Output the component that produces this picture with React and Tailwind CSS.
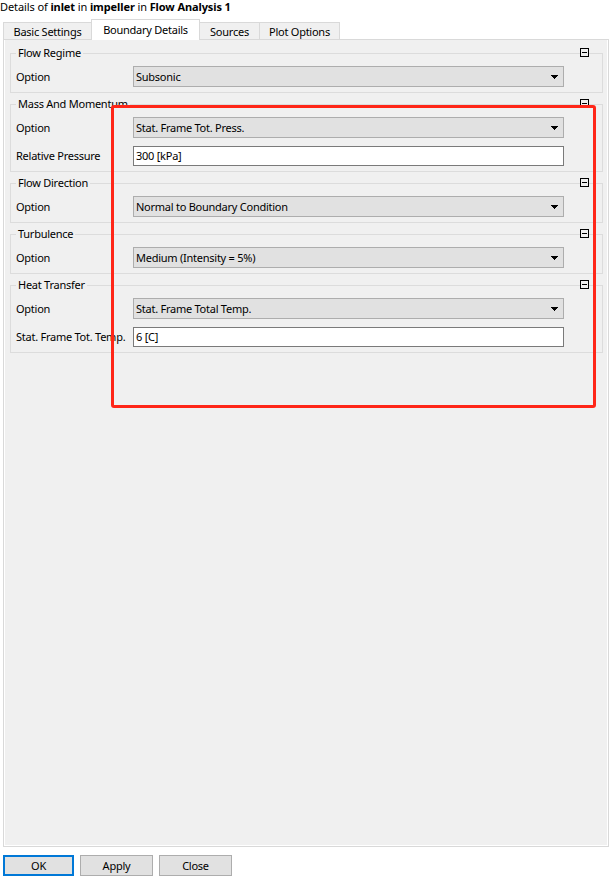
import React from 'react';

const Arrow = () => (
  <svg width="7" height="4" viewBox="0 0 7 4" className="shrink-0" shapeRendering="crispEdges">
    <path d="M0 0H7L3.5 4Z" fill="#000" />
  </svg>
);

const Collapse = () => (
  <svg width="9" height="9" viewBox="0 0 9 9" shapeRendering="crispEdges">
    <rect x="0.5" y="0.5" width="8" height="8" fill="#f0f0f0" stroke="#000" />
    <path d="M2 4.5H7" stroke="#000" />
  </svg>
);

const Combo = ({ value }) => (
  <div className="flex h-[21px] w-[431px] items-center justify-between border border-[#adadad] bg-[#e1e1e1] pl-[2px] pr-[5px]">
    <span className="whitespace-nowrap">{value}</span>
    <Arrow />
  </div>
);

const TextField = ({ value }) => (
  <div className="flex h-[20px] w-[431px] items-center border border-[#7a7a7a] bg-white pl-[2px]">
    <span className="whitespace-nowrap">{value}</span>
  </div>
);

const Row = ({ label, children, className = '' }) => (
  <div className={`flex items-center ${className}`}>
    <div className="w-[117px] shrink-0 whitespace-nowrap">{label}</div>
    {children}
  </div>
);

const Group = ({ title, first, children }) => (
  <div className={`relative ${first ? '' : 'mt-[4px]'}`}>
    <fieldset className="min-w-0 border border-[#dcdcdc] pl-[5px] pr-0 pt-[6px] pb-[5px]">
      <legend className="px-[2px] leading-[14px]">{title}</legend>
      {children}
    </fieldset>
    <div className="absolute right-[14px] top-[2px] leading-none">
      <Collapse />
    </div>
  </div>
);

const tabs = [
  { label: 'Basic Settings', w: 'w-[89px]' },
  { label: 'Boundary Details', w: 'w-[109px]', active: true },
  { label: 'Sources', w: 'w-[61px]' },
  { label: 'Plot Options', w: 'w-[81px]' },
];

export default function App() {
  return (
    <div className="relative h-[877px] w-[614px] overflow-hidden bg-white font-['Noto_Sans',sans-serif] text-[11px] leading-[14px] tracking-[-0.25px] text-black">
      <div className="h-[14px] whitespace-nowrap tracking-[-0.1px]">
        Details of <b>inlet</b> in <b>impeller</b> in <b>Flow Analysis 1</b>
      </div>

      <div className="flex h-[25px] items-end pl-[3px]">
        {tabs.map((t, i) =>
          t.active ? (
            <div
              key={t.label}
              className={`relative z-10 -mb-px -ml-px flex h-[21px] ${t.w} items-center justify-center border border-b-0 border-[#d9d9d9] bg-white pb-[1px]`}
            >
              {t.label}
            </div>
          ) : (
            <div
              key={t.label}
              className={`flex h-[17px] ${t.w} ${i > 0 ? '-ml-px' : ''} items-center justify-center border border-b-0 border-[#d9d9d9] bg-[#f0f0f0] pt-[1px]`}
            >
              {t.label}
            </div>
          )
        )}
      </div>

      <div className="ml-[3px] h-[808px] w-[606px] border border-[#d9d9d9] bg-[#f0f0f0] pl-[6px] pr-[5px] pt-[6px] shadow-[inset_1px_0_0_#fff,inset_-1px_-1px_0_#fff]">
        <Group title="Flow Regime" first>
          <Row label="Option">
            <Combo value="Subsonic" />
          </Row>
        </Group>

        <Group title="Mass And Momentum">
          <Row label="Option">
            <Combo value="Stat. Frame Tot. Press." />
          </Row>
          <Row label="Relative Pressure" className="mt-[8px]">
            <TextField value="300 [kPa]" />
          </Row>
        </Group>

        <Group title="Flow Direction">
          <Row label="Option">
            <Combo value="Normal to Boundary Condition" />
          </Row>
        </Group>

        <Group title="Turbulence">
          <Row label="Option">
            <Combo value="Medium (Intensity = 5%)" />
          </Row>
        </Group>

        <Group title="Heat Transfer">
          <Row label="Option">
            <Combo value="Stat. Frame Total Temp." />
          </Row>
          <Row label="Stat. Frame Tot. Temp." className="mt-[8px]">
            <TextField value="6 [C]" />
          </Row>
        </Group>
      </div>

      <div className="mt-[8px] flex gap-[6px] pl-[3px]">
        <button type="button" className="h-[21px] w-[71px] border-2 border-[#0078d7] bg-[#e1e1e1]">
          OK
        </button>
        <button type="button" className="h-[21px] w-[73px] border border-[#adadad] bg-[#e1e1e1]">
          Apply
        </button>
        <button type="button" className="h-[21px] w-[73px] border border-[#adadad] bg-[#e1e1e1]">
          Close
        </button>
      </div>

      {/* red highlight drawn over the form */}
      <div className="pointer-events-none absolute left-[111px] top-[105px] h-[303px] w-[485px] rounded-[3px] border-[3px] border-[#ff2618]" />
    </div>
  );
}
